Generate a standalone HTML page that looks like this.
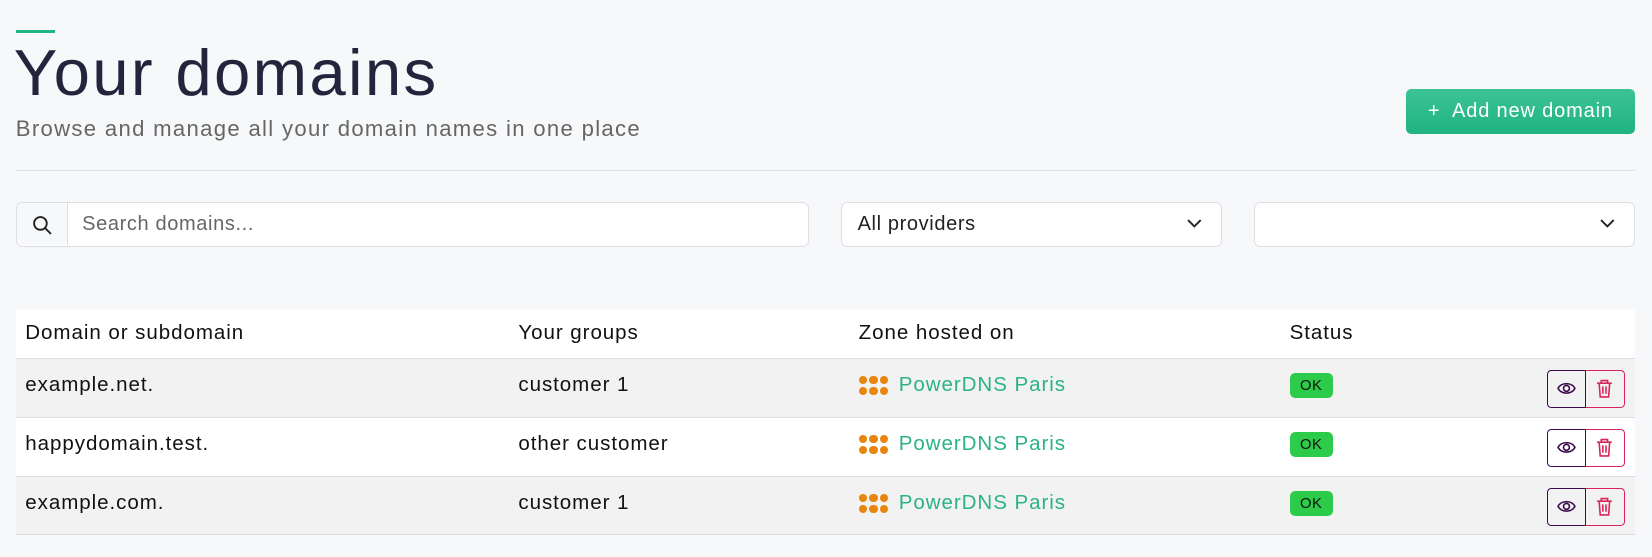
<!DOCTYPE html>
<html><head><meta charset="utf-8"><style>
html,body{margin:0;padding:0;background:#f7f8fa;}
body{width:1568px;height:529px;zoom:1.0536;position:relative;overflow:hidden;font-family:"Liberation Sans",sans-serif;color:#111;}
.a{position:absolute;}
.sel{position:absolute;top:192px;height:42px;background:#fff;border:1px solid #dcdde2;border-radius:6px;box-sizing:border-box;font-size:19px;line-height:40px;padding-left:15px;color:#222;letter-spacing:0.6px;}
.chev{position:absolute;right:18px;top:14px;}
.row{position:absolute;left:15px;width:1537px;height:56px;border-top:1px solid #dedde6;box-sizing:border-box;font-size:19.5px;letter-spacing:0.9px;}
.row span{position:absolute;top:13px;}
.dots{position:absolute;left:800px;top:16px;width:30px;height:20px;}
.dots i{position:absolute;width:8px;height:8px;border-radius:50%;background:#e8850c;}
.prov{color:#2bb383;}
.ok{position:absolute;left:1209px;top:13px;width:41px;height:24px;border-radius:5px;background:#2ccb4a;font-size:14px;line-height:26px;text-align:center;color:#111;letter-spacing:0.5px;}
.act{position:absolute;left:1453px;top:10px;width:74px;height:36px;}
.eye{position:absolute;left:0;top:0;width:37px;height:36px;border:1px solid #3a0a4a;border-radius:4px 0 0 4px;box-sizing:border-box;}
.tr{position:absolute;left:37px;top:0;width:37px;height:36px;border:1px solid #d8245a;border-left:none;border-radius:0 4px 4px 0;box-sizing:border-box;}
.hd span{position:absolute;top:12px;}
</style></head><body>
<div class="a" style="left:15px;top:28px;width:37px;height:3px;background:#20b785"></div>
<div class="a" style="left:13px;top:34px;font-size:62px;color:#25243d;letter-spacing:2.2px;line-height:70px">Your domains</div>
<div class="a" style="left:15px;top:110px;font-size:21px;color:#666;letter-spacing:1.25px">Browse and manage all your domain names in one place</div>
<div class="a" style="left:1334px;top:84px;width:218px;height:43px;border-radius:5px;background:linear-gradient(#3cc394,#20b381);color:#fff;font-size:19px;line-height:43px;text-align:center;letter-spacing:0.8px">+&nbsp; Add new domain</div>
<div class="a" style="left:15px;top:161px;width:1537px;height:1px;background:#dfe0e4"></div>
<div class="sel" style="left:15px;width:753px;padding-left:0">
 <div class="a" style="left:0;top:0;width:48px;height:40px;border-right:1px solid #dcdde2;background:#f7f8fa;border-radius:6px 0 0 6px"></div>
 <svg class="a" style="left:14px;top:11px" width="20" height="20" viewBox="0 0 20 20" fill="none" stroke="#222" stroke-width="1.8"><circle cx="8" cy="8" r="6"/><path d="M12.5 12.5L18 18"/></svg>
 <span class="a" style="left:62px;color:#666">Search domains...</span>
</div>
<div class="sel" style="left:798px;width:362px">All providers<svg class="chev" width="14" height="10" viewBox="0 0 14 10" fill="none" stroke="#222" stroke-width="1.8"><path d="M1 2l6 6 6-6"/></svg></div>
<div class="sel" style="left:1190px;width:362px"><svg class="chev" width="14" height="10" viewBox="0 0 14 10" fill="none" stroke="#222" stroke-width="1.8"><path d="M1 2l6 6 6-6"/></svg></div>
<div class="a hd" style="left:15px;top:293px;width:1537px;height:47px;background:#fff;font-size:19.5px;letter-spacing:0.9px">
 <span style="left:9px">Domain or subdomain</span>
 <span style="left:477px">Your groups</span>
 <span style="left:800px">Zone hosted on</span>
 <span style="left:1209px">Status</span>
</div>
<div class="row" style="top:340px;background:#f2f2f2"><span style="left:9px">example.net.</span><span style="left:477px">customer 1</span><div class="dots"><i style="left:0;top:0"></i><i style="left:10px;top:0"></i><i style="left:20px;top:0"></i><i style="left:0;top:10px"></i><i style="left:10px;top:10px"></i><i style="left:20px;top:10px"></i></div><span class="prov" style="left:838px">PowerDNS Paris</span><div class="ok">OK</div><div class="act"><div class="eye"><svg style="position:absolute;left:9px;top:10px" width="18" height="14" viewBox="0 0 18 14" fill="none" stroke="#3a0a4a" stroke-width="1.5"><path d="M1 7C4 1 14 1 17 7C14 13 4 13 1 7Z"/><circle cx="9" cy="7" r="2.8"/></svg></div><div class="tr"><svg style="position:absolute;left:10px;top:8px" width="16" height="18" viewBox="0 0 16 18" fill="none" stroke="#d8245a" stroke-width="1.5"><path d="M1 4h14M5 4V1.5h6V4M3 4l1 13h8l1-13M6.5 7v7M9.5 7v7"/></svg></div></div></div>
<div class="row" style="top:396px;background:#fff"><span style="left:9px">happydomain.test.</span><span style="left:477px">other customer</span><div class="dots"><i style="left:0;top:0"></i><i style="left:10px;top:0"></i><i style="left:20px;top:0"></i><i style="left:0;top:10px"></i><i style="left:10px;top:10px"></i><i style="left:20px;top:10px"></i></div><span class="prov" style="left:838px">PowerDNS Paris</span><div class="ok">OK</div><div class="act"><div class="eye"><svg style="position:absolute;left:9px;top:10px" width="18" height="14" viewBox="0 0 18 14" fill="none" stroke="#3a0a4a" stroke-width="1.5"><path d="M1 7C4 1 14 1 17 7C14 13 4 13 1 7Z"/><circle cx="9" cy="7" r="2.8"/></svg></div><div class="tr"><svg style="position:absolute;left:10px;top:8px" width="16" height="18" viewBox="0 0 16 18" fill="none" stroke="#d8245a" stroke-width="1.5"><path d="M1 4h14M5 4V1.5h6V4M3 4l1 13h8l1-13M6.5 7v7M9.5 7v7"/></svg></div></div></div>
<div class="row" style="top:452px;background:#f2f2f2;border-bottom:1px solid #dedde6"><span style="left:9px">example.com.</span><span style="left:477px">customer 1</span><div class="dots"><i style="left:0;top:0"></i><i style="left:10px;top:0"></i><i style="left:20px;top:0"></i><i style="left:0;top:10px"></i><i style="left:10px;top:10px"></i><i style="left:20px;top:10px"></i></div><span class="prov" style="left:838px">PowerDNS Paris</span><div class="ok">OK</div><div class="act"><div class="eye"><svg style="position:absolute;left:9px;top:10px" width="18" height="14" viewBox="0 0 18 14" fill="none" stroke="#3a0a4a" stroke-width="1.5"><path d="M1 7C4 1 14 1 17 7C14 13 4 13 1 7Z"/><circle cx="9" cy="7" r="2.8"/></svg></div><div class="tr"><svg style="position:absolute;left:10px;top:8px" width="16" height="18" viewBox="0 0 16 18" fill="none" stroke="#d8245a" stroke-width="1.5"><path d="M1 4h14M5 4V1.5h6V4M3 4l1 13h8l1-13M6.5 7v7M9.5 7v7"/></svg></div></div></div>
</body></html>
